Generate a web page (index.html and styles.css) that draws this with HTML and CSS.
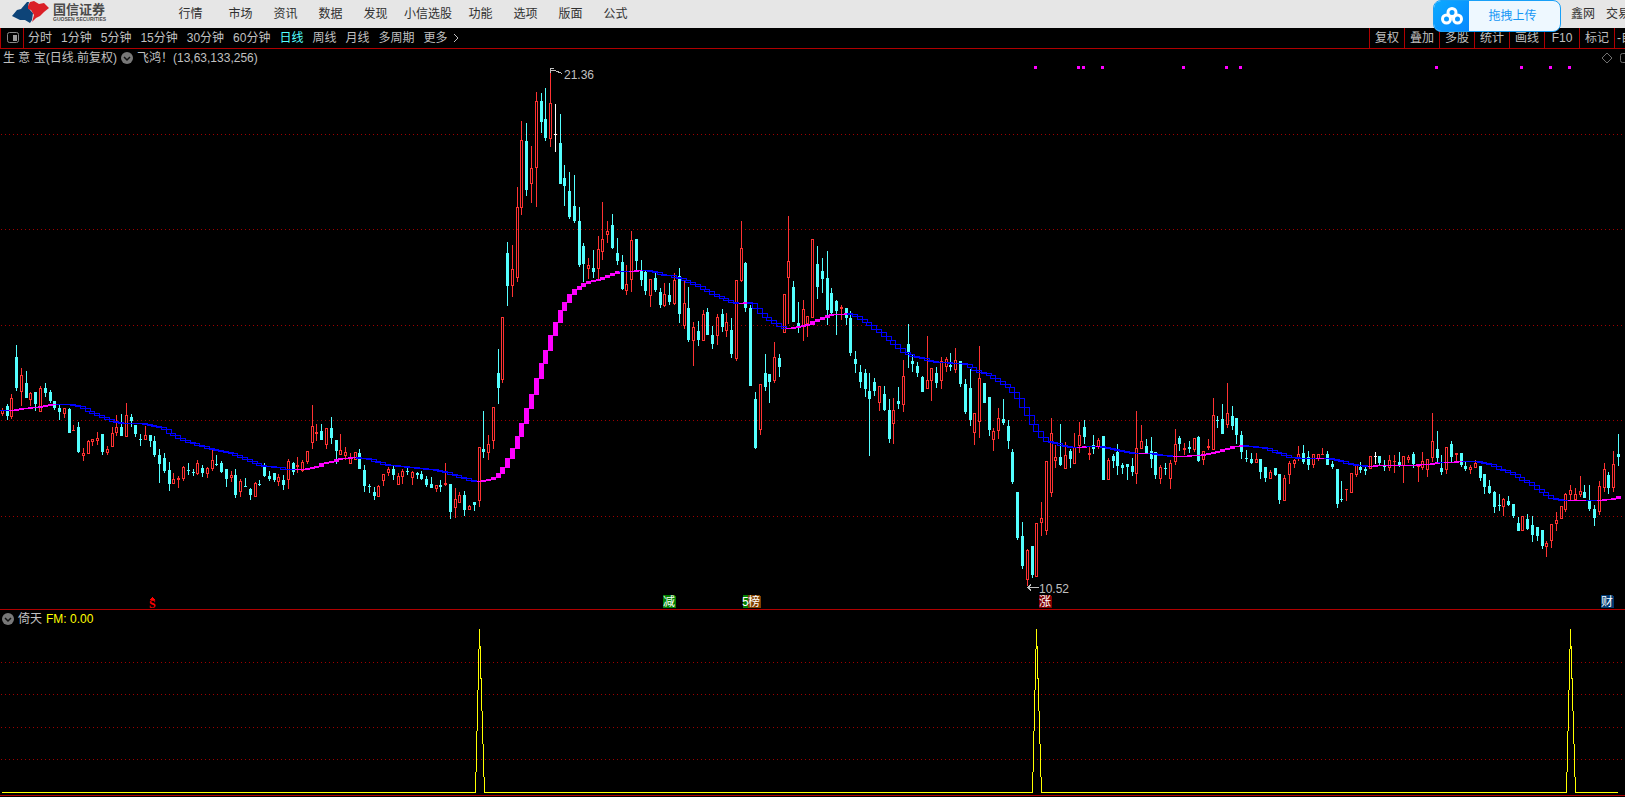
FILE: index.html
```html
<!DOCTYPE html>
<html lang="zh-CN">
<head>
<meta charset="utf-8">
<title>国信证券 - 生意宝 日线</title>
<link rel="stylesheet" href="styles.css">
</head>
<body>
<header class="topbar">
  <svg class="brand" viewBox="0 0 112 28" role="img" aria-label="国信证券">
    <path fill="#0d4478" d="M12 16 17 10 21 9 27 2 29 2 28 7 30 10 33 13 32 20 30 23 25 20 20 20 16 18Z"/>
    <path fill="#da1f26" d="M28 6 30 2 34 1 39 4 44 3 49 8 44 12 40 16 36 18 32 22 34 15 31 10 28 9Z"/>
    <text class="brand-name" x="53" y="14">国信证券</text>
    <text class="brand-sub" x="53" y="21">GUOSEN SECURITIES</text>
  </svg>
  <nav class="menu" aria-label="主菜单">
    <button class="menu-first">行情</button>
    <button>市场</button>
    <button>资讯</button>
    <button>数据</button>
    <button>发现</button>
    <button class="menu-wide">小信选股</button>
    <button>功能</button>
    <button>选项</button>
    <button>版面</button>
    <button>公式</button>
  </nav>
  <nav class="account" aria-label="账户">
    <button>鑫网</button>
    <button class="account-cut">交易</button>
  </nav>
  <button class="upload">
    <span class="upload-icon">
      <svg viewBox="0 0 22 18" width="22" height="18" fill="none" stroke="#fff" stroke-width="3">
        <circle cx="11" cy="5.5" r="4"/><circle cx="5.5" cy="12" r="4"/><circle cx="16.500" cy="12" r="4"/>
      </svg>
    </span>
    <span class="upload-text">拖拽上传</span>
  </button>
</header>

<div class="toolbar">
  <button class="panel-toggle" aria-label="侧栏">
    <svg viewBox="0 0 12 12" width="12" height="12"><rect x=".5" y=".5" width="11" height="10" rx="2" fill="none" stroke="#8a8a8a"/><rect x="6" y="3" width="4" height="6" fill="#9a9a9a"/></svg>
  </button>
  <nav class="periods" aria-label="周期">
    <button>分时</button>
    <button>1分钟</button>
    <button>5分钟</button>
    <button>15分钟</button>
    <button>30分钟</button>
    <button>60分钟</button>
    <button class="active">日线</button>
    <button>周线</button>
    <button>月线</button>
    <button>多周期</button>
    <button class="more">更多
      <svg viewBox="0 0 6 10" width="6" height="10" fill="none" stroke="#c0c0c0"><path d="M1 1 5 5 1 9"/></svg>
    </button>
  </nav>
  <nav class="tools" aria-label="工具">
    <button>复权</button>
    <button>叠加</button>
    <button>多股</button>
    <button>统计</button>
    <button>画线</button>
    <button>F10</button>
    <button>标记</button>
    <button class="tools-cut">-自选</button>
  </nav>
</div>

<main>
  <section class="panel">
    <div class="panel-head">
      <span>生 意 宝(日线.前复权)</span>
      <button class="drop" aria-label="指标菜单"><svg viewBox="0 0 12 12" width="12" height="12"><circle cx="6" cy="6" r="6" fill="#787878"/><path d="M3 5 6 8 9 5" fill="none" stroke="#111" stroke-width="1.500"/></svg></button>
      <span>飞鸿！(13,63,133,256)</span>
      <svg class="head-icons" viewBox="0 0 24 12" width="24" height="12" fill="none" stroke="#707070"><path d="M6 1 11 6 6 11 1 6Z"/><rect x="19.500" y="1.500" width="10" height="9" rx="2"/></svg>
    </div>
    <svg id="price" class="chart" viewBox="0 66 1625 543" role="img" aria-label="日K线图"></svg>
  </section>
  <section class="panel">
    <div class="panel-head panel-head-sub">
      <button class="drop" aria-label="指标菜单"><svg viewBox="0 0 12 12" width="12" height="12"><circle cx="6" cy="6" r="6" fill="#787878"/><path d="M3 5 6 8 9 5" fill="none" stroke="#111" stroke-width="1.500"/></svg></button>
      <span>倚天</span>
      <span class="value">FM: 0.00</span>
    </div>
    <svg id="signal" class="chart" viewBox="0 628 1625 167" role="img" aria-label="倚天指标"></svg>
  </section>
</main>
<script src="chart.js"></script>
</body>
</html>
```

FILE: styles.css
```css
body {
  margin: 0;
  background: #000;
  color: #c0c0c0;
  font: 12px/16px "Liberation Sans", "Noto Sans CJK SC", sans-serif;
  overflow: hidden;
}

button {
  margin: 0;
  padding: 0;
  border: 0;
  background: none;
  color: inherit;
  font: inherit;
  white-space: nowrap;
}

.topbar {
  position: relative;
  display: flex;
  align-items: center;
  height: 28px;
  background: #e6e6e6;
  color: #303030;
}

.brand {
  flex: none;
  width: 112px;
  height: 28px;
}

.brand-name {
  font: 700 13px "Noto Sans CJK SC", sans-serif;
  fill: #4a4a4a;
}

.brand-sub {
  font: 700 5px "Liberation Sans", sans-serif;
  fill: #4a4a4a;
}

.menu {
  display: flex;
  flex: 1;
  padding-left: 51px;
}

.menu button {
  width: 45px;
}

.menu .menu-first {
  width: 55px;
}

.menu .menu-wide {
  width: 60px;
}

.account {
  display: flex;
  gap: 11px;
}

.account-cut {
  width: 19px;
  overflow: hidden;
  text-align: left;
}

.upload {
  position: absolute;
  top: 0;
  right: 64px;
  display: flex;
  box-sizing: border-box;
  width: 128px;
  height: 32px;
  overflow: hidden;
  border: 1px solid #18a0f8;
  border-radius: 8px;
  background: #eef8ff;
  color: #1496f5;
}

.upload-icon {
  display: grid;
  place-items: center;
  width: 35px;
  height: 30px;
  background: linear-gradient(135deg, #0caaff, #0888ff);
}

.upload-text {
  flex: 1;
  padding-right: 4px;
  line-height: 30px;
}

.toolbar {
  display: flex;
  height: 20px;
  border-bottom: 1px solid #b00000;
}

.panel-toggle {
  display: grid;
  place-items: center;
  width: 24px;
  padding-left: 2px;
  border: solid #b00000;
  border-width: 0 1px;
  box-sizing: border-box;
}

.periods {
  display: flex;
  flex: 1;
  gap: 9px;
  padding-left: 4px;
}

.periods .active {
  color: #54ffff;
}

.more {
  display: flex;
  align-items: center;
  gap: 5px;
}

.tools {
  display: flex;
}

.tools button {
  box-sizing: border-box;
  width: 35px;
  border-left: 1px solid #b00000;
}

.tools .tools-cut {
  width: 11px;
  padding-left: 2px;
  overflow: hidden;
  text-align: left;
}

.panel {
  border-bottom: 1px solid #b00000;
}

.panel-head {
  display: flex;
  align-items: center;
  gap: 4px;
  height: 17px;
  padding-left: 3px;
}

.panel-head-sub {
  height: 18px;
  padding-left: 2px;
}

.panel-head .value {
  color: #ff0;
}

.drop {
  display: grid;
}

.head-icons {
  margin-left: auto;
}

.chart {
  display: block;
  width: 100%;
  height: auto;
  shape-rendering: crispEdges;
}

.chart text {
  font: 12px "Liberation Sans", "Noto Sans CJK SC", sans-serif;
  fill: #c0c0c0;
}

.chart .tag {
  fill: #fff;
}

.chart .sell {
  font: 700 12px "Liberation Serif", serif;
  fill: #f00;
}

.grid {
  stroke: #a00000;
  stroke-dasharray: 1 3;
}

.up {
  fill: none;
  stroke: #ff3232;
}

.down {
  fill: #54ffff;
}

.flat {
  fill: #fff;
}

.wick {
  fill: #ff3232;
}

.rise {
  fill: #f0f;
}

.fall {
  fill: none;
  stroke: #00f;
}

.pointer {
  fill: none;
  stroke: #c0c0c0;
}

.spike {
  fill: none;
  stroke: #ff0;
}
```

FILE: chart.js
```js
const NS = "http://www.w3.org/2000/svg";

function add(parent, name, attrs, text) {
  const node = document.createElementNS(NS, name);
  for (const key in attrs) node.setAttribute(key, attrs[key]);
  if (text) node.textContent = text;
  parent.appendChild(node);
  return node;
}

// Each block: origin x, origin y, then candles as
// kind centre high bodyTop bodyBottom low, in thirds of a unit from the origin.
const blocks = [
  [0, 320, `r 7 264 270 282 288,c 22 252 258 288 300,r 34 222 234 291 297,c 49 75 111 204 213,r 64 144 165 216 258,
c 79 153 189 234 234,r 91 216 219 240 258,c 106 216 216 252 273,r 121 198 204 276 276,c 136 189 204 219 231,
c 151 210 216 243 249,c 163 243 243 264 270,c 178 252 264 276 300,r 193 264 264 282 294,c 208 264 267 339 339,
r 220 315 330 333 333,c 235 306 321 396 399,r 250 384 399 408 423,r 265 360 363 402 402,r 277 357 357 366 378,
r 292 336 354 363 375,c 307 342 342 396 405,r 322 378 387 399 405,r 337 321 339 381 381,r 349 285 321 339 348,
c 364 282 321 348 348,r 379 249 285 351 351,c 394 282 291 303 321,c 406 315 315 342 351,c 421 342 357 360 378,
r 436 318 345 360 360,c 451 345 345 363 381,c 463 348 363 405 411,c 478 387 405 432 489,c 493 399 414 453 459,
c 508 426 450 492 513,r 520 459 477 492 492,r 535 468 474 480 504,r 550 438 441 477 483,c 565 429 450 453 465,
c 580 447 456 459 468,r 592 420 429 462 465,c 607 435 444 459 471,r 622 441 444 462 474,r 637 390 420 447 453,
c 649 405 432 435 438,c 664 423 429 456 459,c 679 447 447 477 501,r 694 453 465 474 486,c 706 447 465 525 534,
r 721 477 483 516 531,c 736 474 498 501 501,c 751 504 507 525 540,r 766 486 489 531 531,c 778 480 492 495 498,
c 793 429 441 468 471,c 808 453 468 477 483`],
  [270, 380, `c 13 279 279 300 306,r 25 282 291 306 318,c 40 285 300 315 330,r 55 237 243 300 327,c 70 246 249 276 285,
r 82 231 255 261 279,r 97 240 246 273 276,r 112 213 213 246 252,r 127 75 138 189 207,r 139 132 156 162 183,
c 154 132 153 180 180,r 169 144 144 195 207,c 184 111 144 174 192,c 199 180 180 213 252,r 211 162 210 225 225,
r 226 201 216 228 240,r 241 219 234 252 252,r 256 216 216 240 240,c 268 207 219 267 267,c 283 255 270 318 336,
c 298 312 318 321 339,c 313 321 336 348 360,r 325 315 318 351 351,r 340 282 282 303 318,r 355 261 267 279 288,
c 370 258 267 285 300,r 385 279 288 315 315,r 397 267 273 291 312,c 412 264 273 276 285,r 427 273 276 294 315,
c 442 276 279 285 297,c 454 273 282 297 300,c 469 288 297 315 321,c 484 291 312 324 324,r 499 315 315 327 336,
c 511 300 315 321 336,r 526 249 309 315 318,c 541 312 312 396 417,r 556 324 357 384 414,r 568 336 345 369 369,
c 583 333 345 390 408,r 598 375 378 390 390,c 613 366 366 375 393,r 628 201 201 363 381,c 640 93 207 216 234,
r 655 165 192 219 240,r 670 81 81 183 207`],
  [460, 60, `c 115 867 939 984 1032,r 127 771 771 960 969,c 142 546 579 678 738,r 157 555 627 678 711,r 172 381 441 654 666,
r 184 183 240 444 465,c 199 189 243 390 408,r 214 258 324 372 429,r 229 96 123 324 441,c 244 99 123 186 219,
c 256 84 177 234 243,r 271 36 129 237 261,w 286 132 222 225 276,c 301 162 249 372 372,c 313 315 354 378 438,
c 328 336 393 471 477,c 343 345 438 483 489,c 358 441 483 615 621,c 370 549 558 612 666,r 385 594 615 627 657,
c 400 570 624 636 654,r 415 528 567 627 657,r 427 426 537 576 600,r 442 483 513 525 549,c 457 462 495 564 567,
c 472 534 579 603 615,c 487 585 606 687 690,r 499 615 672 693 705,r 514 513 540 660 696,c 529 537 537 603 630,
c 544 600 630 660 678,c 556 633 636 693 705,r 571 657 657 708 741,c 586 639 654 690 696,c 601 684 696 735 744,
r 613 669 702 738 741,c 628 669 705 726 735,r 643 639 660 732 735,c 658 624 648 762 789,r 673 660 729 798 807,
c 685 681 744 840 846`],
  [660, 200, `r 100 366 381 423 498,c 115 363 393 420 438,r 130 330 342 423 423,c 142 324 336 405 405,c 157 378 405 432 447,
r 172 342 351 408 435,c 187 327 342 381 396,r 199 339 366 393 411,c 214 354 390 462 474,r 229 240 240 477 483,
r 244 63 144 243 246,c 256 186 189 324 336,c 271 315 324 558 558,c 286 576 597 744 747,r 301 552 552 690 705,
c 316 462 519 561 573,c 328 522 522 546 609,r 343 426 471 543 549,c 358 462 474 501 531,r 373 282 282 399 399,
r 385 48 183 234 372,c 400 243 261 366 366,c 415 306 369 384 399,r 430 300 327 378 423,r 442 348 348 372 411,
r 457 117 117 354 354,c 472 138 192 261 297,c 487 174 213 237 279,c 502 153 234 330 375,c 514 264 279 339 342,
c 529 300 303 333 405,r 544 315 321 327 360,c 559 324 324 354 375,c 571 333 354 459 468,c 586 453 477 492 519,
c 601 495 516 546 564,c 616 507 519 567 591,c 628 519 573 597 768,c 643 534 546 573 588,r 658 558 558 609 633,
c 673 558 582 630 633,c 688 597 630 717 729,r 700 594 630 672 732,c 715 561 603 612 627`],
  [860, 310, `r 130 150 198 285 306,c 145 42 102 129 174,c 157 132 153 162 186,c 172 156 168 189 201,c 187 198 201 246 246,
r 202 78 210 237 237,r 214 174 174 213 273,c 229 171 189 219 234,r 244 141 153 213 237,r 259 141 147 171 186,
c 271 129 165 171 183,r 286 114 150 180 189,c 301 153 153 222 231,c 316 207 222 306 312,c 331 177 234 330 348,
r 343 309 309 369 405,r 358 108 204 336 384,c 373 219 219 279 279,c 388 261 261 360 378,r 400 354 363 390 423,
r 415 294 324 363 387,c 430 267 327 339 345,c 445 330 348 393 417,c 457 417 426 516 522,c 472 546 546 684 690,
c 487 636 678 768 777,r 502 717 720 810 828,c 517 708 708 795 804,r 529 639 639 801 801,r 544 576 624 639 678,
r 559 453 453 663 675,r 574 324 369 549 561,r 586 405 441 453 474,c 601 342 441 465 468,r 616 396 435 477 477,
c 631 417 423 447 474,r 643 369 411 462 462,r 658 336 375 408 429,c 673 330 351 381 402,r 688 408 429 435 450,
c 700 375 405 417 432,r 715 384 390 411 417`],
  [1060, 370, `c 1 162 261 285 288,r 16 216 255 297 297,c 130 198 198 330 330,r 145 264 270 330 330,c 160 252 258 273 294,c 172 222 246 288 315,c 187 279 285 294 312,
c 202 282 282 291 330,c 217 264 288 306 318,r 229 123 234 312 342,r 244 165 213 237 237,c 259 207 228 249 249,
c 274 201 243 267 294,c 286 246 246 315 327,r 301 285 291 327 342,c 316 279 294 297 315,r 331 270 279 327 357,
r 346 177 222 276 285,c 358 198 204 222 243,r 373 219 234 240 255,c 388 213 231 237 249,r 403 204 204 240 246,
c 415 198 201 273 276,r 430 243 243 270 285,r 445 207 228 234 240,r 460 84 135 240 240,c 472 138 150 153 174,
c 487 102 147 192 192,r 502 39 129 165 174,c 517 108 138 168 180,c 529 144 144 195 222,c 544 183 195 246 267,
c 559 240 264 267 276,c 574 249 267 279 282,r 589 249 267 279 279,c 601 267 267 306 327,c 616 291 291 324 336,
r 631 300 306 327 327,c 646 294 294 315 318,c 658 312 312 390 402,r 673 315 324 393 393,r 688 273 279 315 342,
r 703 267 270 282 294,r 715 228 252 264 273,c 730 225 249 276 282,c 745 243 261 285 300,r 760 252 252 285 294,
r 775 252 252 267 273,r 787 234 252 255 255,c 802 243 252 285 285,c 817 273 282 291 297,c 832 297 297 402 414`],
  [1330, 400, `c 7 183 192 201 207,c 34 243 297 300 306,r 49 267 267 270 303,r 64 219 219 279 279,r 79 192 192 225 231,c 91 186 201 210 219,
c 106 201 207 213 225,r 121 168 168 207 207,w 136 156 168 171 192,c 148 168 168 189 198,c 163 180 198 201 213,
r 178 165 180 204 213,r 193 165 183 186 219,c 208 156 186 195 201,r 220 168 168 198 249,r 235 165 171 180 189,
c 250 156 162 192 204,r 265 195 195 201 246,r 277 156 183 204 210,r 292 177 177 210 231,r 307 39 123 174 186,
c 322 93 147 174 186,c 334 165 204 216 225,r 349 141 141 210 222,c 364 123 132 171 186,r 379 159 159 165 189,
c 394 159 159 195 201,c 406 186 198 207 213,r 421 195 201 210 222,r 436 180 189 204 204,c 451 198 198 234 243,
c 463 222 222 261 282,c 478 240 258 279 282,c 493 273 276 321 339,c 508 282 315 318 333,r 520 294 297 321 348,
c 535 288 303 315 318,c 550 312 312 348 354,c 565 351 369 393 393,r 577 348 348 393 393,c 592 342 357 387 390,
c 607 348 375 405 426,c 622 381 381 408 423,c 637 390 390 438 447,r 649 423 429 441 471,r 664 372 372 423 444,
r 679 336 360 372 393,r 694 318 318 357 357,r 706 279 282 330 336,r 721 255 270 285 300,r 736 264 282 300 300,
r 751 228 273 285 291,c 763 255 276 294 294,c 778 255 303 327 333,c 793 315 327 354 378,r 808 243 258 336 345,
r 823 189 207 264 276,c 835 216 225 264 282,r 850 153 192 264 276,c 865 102 162 171 198`]
];

// Points of the moving average, x:y.
const average = `2:410 11:410 30:407 40:406 50:404 57:404 69:404 78:406 83:408 88:411 98:415 107:419 117:422 125:423
140:423 150:425 160:427 165:430 171:434 178:438 186:441 195:444 205:447 215:450 230:453 240:457 250:461 260:465 267:466
276:467 285:469 300:469 310:468 315:466 321:463 330:461 340:458 350:457 365:458 370:459 378:462 383:464 392:465 410:467
430:469 445:472 455:475 463:478 470:480 476:482 480:481 488:479 494:476 499:472 503:465 508:456 513:446 518:434 522:419
527:405 532:391 537:375 542:360 546:346 551:332 556:319 561:308 565:300 570:293 575:288 580:285 584:282 595:280 603:277
609:274 618:271 625:271 641:270 653:271 660:274 668:275 675:277 683:279 688:282 696:285 703:289 710:293 716:296 725:299
731:302 738:304 741:303 748:302 752:304 757:310 763:315 767:319 774:323 781:327 786:329 790:327 800:326 808:324 812:321
819:318 826:315 835:314 847:313 852:315 858:317 862:320 868:324 873:328 878:331 883:335 888:339 893:344 898:348 902:352
912:356 922:358 928:360 938:362 960:363 965:364 970:367 974:370 979:372 984:373 989:375 994:379 998:381 1003:384 1008:387
1012:392 1017:398 1022:407 1027:415 1032:424 1036:431 1041:437 1046:441 1051:442 1058:444 1065:446 1073:447 1087:446
1101:446 1105:447 1115:449 1122:451 1130:453 1139:453 1149:453 1155:454 1160:455 1172:456 1180:456 1192:455 1205:454
1212:452 1219:450 1226:448 1233:446 1241:445 1250:446 1260:447 1268:449 1275:452 1282:454 1290:457 1300:458 1325:458
1335:459 1341:461 1347:463 1354:465 1368:466 1380:465 1400:465 1430:464 1437:462 1447:462 1463:461 1475:461 1485:463
1492:465 1500:469 1507:472 1515:475 1520:479 1527:482 1533:486 1540:491 1547:496 1555:499 1563:500 1585:500 1597:500
1605:499 1611:498 1619:496`.split(/\s+/).map(p => p.split(":").map(Number));

const rising = [[11, 57], [296, 357], [477, 621], [630, 643], [739, 748], [785, 846], [1077, 1087], [1096, 1101],
  [1139, 1149], [1173, 1244], [1316, 1325], [1368, 1438], [1444, 1463], [1568, 1587], [1597, 1622]];

function averageAt(x) {
  const i = Math.max(1, average.findIndex(p => p[0] >= x));
  const [x0, y0] = average[i - 1];
  const [x1, y1] = average[i];
  return Math.round(y0 + (y1 - y0) * (x - x0) / (x1 - x0));
}

function gridRows(svg, rows) {
  for (const y of rows) add(svg, "line", { class: "grid", x1: 1, x2: 1625, y1: y + 0.5, y2: y + 0.5 });
}

const price = document.getElementById("price");
gridRows(price, [134, 229, 325, 420, 516]);

const seen = new Map();
for (const [ox, oy, rows] of blocks) {
  for (const row of rows.split(",")) {
    const [kind, cx, ...ys] = row.trim().split(" ");
    const x = ox + Math.floor(cx / 3);
    const [high, top, bottom, low] = ys.map(v => oy + Math.round(v / 3));
    if (!seen.has(x)) seen.set(x, { kind, x, high, top, bottom, low });
  }
}
const candles = [...seen.values()].sort((a, b) => a.x - b.x);

for (const { kind, x, high, top, bottom, low } of candles) {
  if (kind === "r") {
    if (top > high) add(price, "rect", { class: "wick", x, y: high, width: 1, height: top - high });
    if (low > bottom) add(price, "rect", { class: "wick", x, y: bottom, width: 1, height: low - bottom });
    if (bottom - top < 3) add(price, "rect", { class: "wick", x: x - 1, y: top, width: 3, height: bottom - top });
    else add(price, "rect", { class: "up", x: x - 0.5, y: top + 0.5, width: 2, height: bottom - top - 1 });
  } else {
    const cls = kind === "w" ? "flat" : "down";
    add(price, "rect", { class: cls, x, y: high, width: 1, height: low - high });
    add(price, "rect", { class: cls, x: x - 1, y: top, width: 3, height: bottom - top });
  }
}

candles.forEach(({ x }, i) => {
  const before = averageAt(i ? candles[i - 1].x : x);
  const now = averageAt(x);
  const top = Math.min(before, now);
  const size = Math.abs(now - before);
  if (rising.some(([a, b]) => x >= a && x <= b)) {
    add(price, "rect", { class: "rise", x: x - 2, y: top, width: 5, height: size + 1 });
  } else {
    add(price, size ? "rect" : "path", size
      ? { class: "fall", x: x - 2.5, y: top + 0.5, width: 5, height: size }
      : { class: "fall", d: `M${x - 3} ${top + 0.5}h6` });
  }
});

for (const x of [1035, 1078, 1083, 1102, 1183, 1226, 1240, 1436, 1521, 1550, 1569]) {
  add(price, "rect", { class: "rise", x: x - 1, y: 66, width: 3, height: 3 });
}

add(price, "path", { class: "pointer", d: "M554 68.5h-3.500v4M551 70.500h4l7 3" });
add(price, "text", { x: 564, y: 79 }, "21.36");
add(price, "path", { class: "pointer", d: "M1028 587.500h11M1031 584.500l-3 3 3 3" });
add(price, "text", { x: 1039, y: 593 }, "10.52");

for (const [x, color, label] of [[663, "#008000", "减"], [743, "#008000", "5"], [748, "#804000", "榜"],
  [1039, "#800000", "涨"], [1601, "#003870", "财"]]) {
  add(price, "path", { fill: color, d: `M${x} 595h11l2 2v11h-13z` });
  add(price, "text", { class: "tag", x: label === "5" ? x - 1 : x, y: 606 }, label);
}
add(price, "path", { fill: "#f00", d: "M150 600 152.500 597 155 600Z" });
add(price, "text", { class: "sell", x: 149, y: 608 }, "S");

const signal = document.getElementById("signal");
gridRows(signal, [662, 694, 727, 759]);
add(signal, "polyline", {
  class: "spike",
  points: "2,792.5 475.5,792.5 479.5,629 484.5,792.5 1032.5,792.5 1036.5,629 1041.5,792.5 1566.5,792.5 1570.5,629 1575.5,792.5 1618,792.5"
});
```
